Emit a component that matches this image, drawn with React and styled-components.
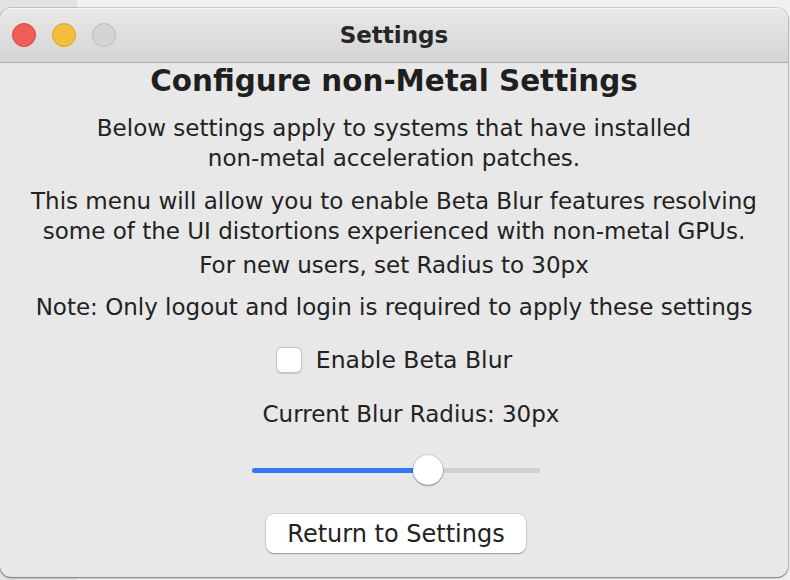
import React, { useState } from "react";
import styled, { createGlobalStyle } from "styled-components";

const Global = createGlobalStyle`
  html, body {
    margin: 0;
    padding: 0;
  }
  body {
    height: 580px;
    overflow: hidden;
    background: linear-gradient(to right, #e3e3e3 77px, #f1f1f1 77px);
    font-family: "DejaVu Sans", "Liberation Sans", sans-serif;
  }
`;

const Window = styled.div`
  margin-top: 8px;
  width: 788px;
  height: 569px;
  border-radius: 11px;
  background: #e8e8e8;
  box-shadow: 0 0 0 0.5px rgba(0, 0, 0, 0.25), 0 1px 2px rgba(0, 0, 0, 0.45);
  overflow: hidden;
  display: flex;
  flex-direction: column;
`;

const TitleBar = styled.div`
  height: 54px;
  flex: none;
  display: flex;
  align-items: center;
  position: relative;
  background: linear-gradient(#e9e9e9, #d4d4d4);
  border-bottom: 1px solid #adadad;
  box-shadow: inset 0 1px 0 #f6f6f6;
`;

const Lights = styled.div`
  display: flex;
  gap: 16px;
  padding-left: 12px;
`;

const Light = styled.span`
  width: 24px;
  height: 24px;
  border-radius: 50%;
  box-sizing: border-box;
  background: ${(p) => p.$fill};
  border: 1px solid ${(p) => p.$edge};
`;

const Title = styled.div`
  position: absolute;
  left: 0;
  right: 0;
  text-align: center;
  font-weight: bold;
  font-size: 23px;
  color: #262626;
  pointer-events: none;
`;

const Content = styled.div`
  flex: 1;
  display: flex;
  flex-direction: column;
  align-items: center;
  text-align: center;
  color: #222;
  padding-top: 1px;
`;

const Heading = styled.h1`
  margin: 0;
  font-size: 29.4px;
  font-weight: bold;
  line-height: 34px;
  color: #1f1f1f;
`;

const Para = styled.p`
  margin: ${(p) => p.$mt || 0}px 0 0;
  padding-left: ${(p) => p.$shift || 0}px;
  font-size: 23px;
  line-height: 30px;
  white-space: nowrap;
`;

const Line = styled.span`
  display: block;
  margin-top: ${(p) => p.$mt || 0}px;
`;

const CheckRow = styled.label`
  margin-top: 23px;
  display: flex;
  align-items: center;
  gap: 14px;
  font-size: 23.5px;
  line-height: 30px;
  cursor: pointer;
`;

const Box = styled.span`
  width: 26px;
  height: 26px;
  box-sizing: border-box;
  border-radius: 6px;
  background: #fff;
  border: 1px solid #c4c4c4;
  box-shadow: 0 0.5px 1px rgba(0, 0, 0, 0.15);
`;

const Slider = styled.div`
  margin-top: 26px;
  width: 288px;
  height: 30px;
  position: relative;
  display: flex;
  align-items: center;
  transform: translateX(2px);
`;

const Track = styled.div`
  width: 100%;
  height: 5px;
  border-radius: 3px;
  background: #d0d0d0;
  overflow: hidden;
`;

const Fill = styled.div`
  height: 100%;
  background: #3478f6;
`;

const Knob = styled.span`
  position: absolute;
  top: 0;
  width: 30px;
  height: 30px;
  border-radius: 50%;
  background: #fff;
  box-shadow: 0 0 0 0.5px rgba(0, 0, 0, 0.2), 0 1px 2px rgba(0, 0, 0, 0.35);
  transform: translateX(-50%);
`;

const Button = styled.button`
  margin-top: 29px;
  width: 260px;
  height: 39px;
  border: none;
  border-radius: 8px;
  background: #fff;
  box-shadow: 0 0 0 0.5px rgba(0, 0, 0, 0.15), 0 1px 1.5px rgba(0, 0, 0, 0.3);
  font-family: inherit;
  font-size: 24px;
  color: #222;
  cursor: pointer;
  transform: translateX(2px);
`;

export default function App() {
  const [radius] = useState(30);
  const pct = 61;
  return (
    <>
      <Global />
      <Window>
        <TitleBar>
          <Lights>
            <Light $fill="#ef5f57" $edge="#d9473f" />
            <Light $fill="#f6bc3b" $edge="#dca22c" />
            <Light $fill="#d3d3d3" $edge="#bcbcbc" />
          </Lights>
          <Title>Settings</Title>
        </TitleBar>
        <Content>
          <Heading>Configure non-Metal Settings</Heading>
          <Para $mt={15}>
            Below settings apply to systems that have installed
            <br />
            non-metal acceleration patches.
          </Para>
          <Para $mt={13}>
            This menu will allow you to enable Beta Blur features resolving
            <br />
            some of the UI distortions experienced with non-metal GPUs.
            <Line $mt={4}>For new users, set Radius to {radius}px</Line>
          </Para>
          <Para $mt={12}>
            Note: Only logout and login is required to apply these settings
          </Para>
          <CheckRow>
            <Box />
            Enable Beta Blur
          </CheckRow>
          <Para $mt={24} $shift={34}>
            Current Blur Radius: {radius}px
          </Para>
          <Slider>
            <Track>
              <Fill style={{ width: `${pct}%` }} />
            </Track>
            <Knob style={{ left: `${pct}%` }} />
          </Slider>
          <Button>Return to Settings</Button>
        </Content>
      </Window>
    </>
  );
}
